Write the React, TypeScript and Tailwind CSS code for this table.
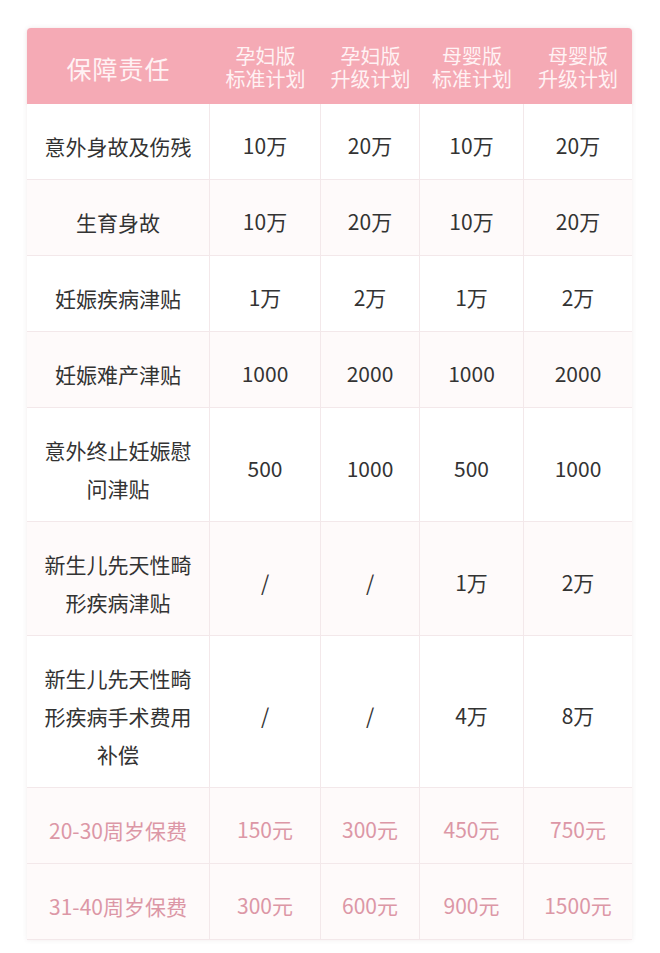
import React from "react";

const cols = ["w-[183px]", "w-[111px]", "w-[99px]", "w-[104px]", "w-[108px]"];

type Row = { label: string[]; vals: string[]; bg: string; price?: boolean };

const rows: Row[] = [
  { label: ["意外身故及伤残"], vals: ["10万", "20万", "10万", "20万"], bg: "bg-white" },
  { label: ["生育身故"], vals: ["10万", "20万", "10万", "20万"], bg: "bg-[#fefafa]" },
  { label: ["妊娠疾病津贴"], vals: ["1万", "2万", "1万", "2万"], bg: "bg-white" },
  { label: ["妊娠难产津贴"], vals: ["1000", "2000", "1000", "2000"], bg: "bg-[#fefafa]" },
  { label: ["意外终止妊娠慰", "问津贴"], vals: ["500", "1000", "500", "1000"], bg: "bg-white" },
  { label: ["新生儿先天性畸", "形疾病津贴"], vals: ["/", "/", "1万", "2万"], bg: "bg-[#fefafa]" },
  { label: ["新生儿先天性畸", "形疾病手术费用", "补偿"], vals: ["/", "/", "4万", "8万"], bg: "bg-white" },
  { label: ["20-30周岁保费"], vals: ["150元", "300元", "450元", "750元"], bg: "bg-[#fefafa]", price: true },
  { label: ["31-40周岁保费"], vals: ["300元", "600元", "900元", "1500元"], bg: "bg-[#fefafa]", price: true },
];

const headers = [
  ["孕妇版", "标准计划"],
  ["孕妇版", "升级计划"],
  ["母婴版", "标准计划"],
  ["母婴版", "升级计划"],
];

export default function App() {
  return (
    <div
      className="w-[660px] h-[953px] bg-white pt-[28px] pl-[27px]"
      style={{ fontFamily: '"Noto Sans CJK SC", "Noto Sans", sans-serif' }}
    >
      <div className="w-[605px] shadow-[0_0_5px_rgba(120,80,90,0.10)] rounded-t-[4px]">
        <div className="flex h-[76px] bg-[#f5aab5] rounded-t-[4px] text-[#fff2f4] shadow-[0_1px_3px_rgba(200,120,130,0.15)]">
          <div className={`${cols[0]} flex items-center justify-center text-[25px] tracking-[1px] pt-[6px]`}>
            保障责任
          </div>
          {headers.map((h, i) => (
            <div
              key={i}
              className={`${cols[i + 1]} flex flex-col items-center justify-center text-[20px] leading-[23px] pt-[2px]`}
            >
              <div className="h-[23px]">{h[0]}</div>
              <div className="h-[23px]">{h[1]}</div>
            </div>
          ))}
        </div>
        {rows.map((r, ri) => (
          <div key={ri} className={`flex ${r.bg} border-b border-[#f3e8ea]`}>
            <div
              className={`${cols[0]} border-r border-[#f3e8ea] pt-[23px] pb-[14px] text-center text-[21px] leading-[38px] ${
                r.price ? "text-[#dc97a6]" : "text-[#333333]"
              }`}
            >
              {r.label.map((l, li) => (
                <div key={li}>{l}</div>
              ))}
            </div>
            {r.vals.map((v, vi) => (
              <div
                key={vi}
                className={`${cols[vi + 1]} ${vi < 3 ? "border-r border-[#f3e8ea]" : ""} flex items-center justify-center pt-[8px] text-[21px] ${
                  r.price ? "text-[#dc97a6]" : "text-[#333333]"
                }`}
              >
                {v}
              </div>
            ))}
          </div>
        ))}
      </div>
    </div>
  );
}
